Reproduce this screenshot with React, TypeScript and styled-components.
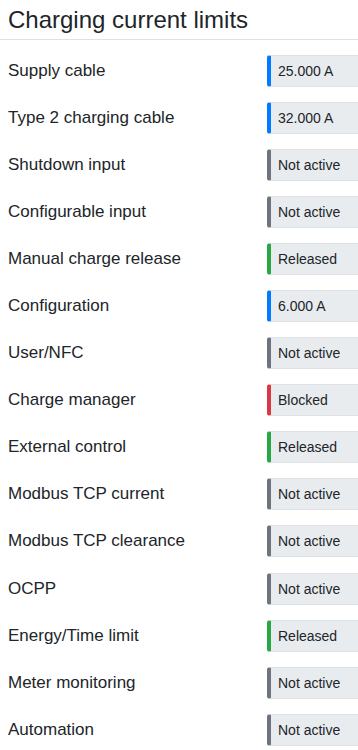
import styled, { createGlobalStyle } from "styled-components";
import type { FC } from "react";

type Tone = "blue" | "green" | "red" | "gray";

const toneColors: Record<Tone, string> = {
    blue: "#007bff",
    green: "#28a745",
    red: "#dc3545",
    gray: "#6c757d"
};

const GlobalStyle = createGlobalStyle`
    body {
        margin: 0;
        background: #ffffff;
        font-family: "Liberation Sans", Arial, sans-serif;
        color: #212529;
        overflow: hidden;
    }
`;

const Page = styled.div`
    width: 358px;
    overflow: hidden;
`;

const Header = styled.div`
    height: 39px;
    border-bottom: 1px solid #dee2e6;
    padding: 0 8px;
    display: flex;
    align-items: center;
`;

const Title = styled.h1`
    margin: 0;
    font-size: 24px;
    font-weight: 400;
    line-height: 1;
`;

const List = styled.div`
    display: flex;
    flex-direction: column;
    padding-top: 7px;
`;

const Row = styled.div`
    height: 47.1px;
    display: flex;
    align-items: center;
    justify-content: space-between;
    padding-left: 8px;
`;

const Label = styled.span`
    font-size: 17px;
`;

const Badge = styled.div<{ $tone: Tone }>`
    box-sizing: border-box;
    width: 102px;
    margin-right: -11px;
    height: 32px;
    display: flex;
    align-items: center;
    padding-left: 7px;
    background: #e9ecef;
    border: 1px solid #dee2e6;
    border-left: 4px solid ${(p) => toneColors[p.$tone]};
    border-radius: 3px;
    font-size: 14px;
`;

const rows: { label: string; value: string; tone: Tone }[] = [
    { label: "Supply cable", value: "25.000 A", tone: "blue" },
    { label: "Type 2 charging cable", value: "32.000 A", tone: "blue" },
    { label: "Shutdown input", value: "Not active", tone: "gray" },
    { label: "Configurable input", value: "Not active", tone: "gray" },
    { label: "Manual charge release", value: "Released", tone: "green" },
    { label: "Configuration", value: "6.000 A", tone: "blue" },
    { label: "User/NFC", value: "Not active", tone: "gray" },
    { label: "Charge manager", value: "Blocked", tone: "red" },
    { label: "External control", value: "Released", tone: "green" },
    { label: "Modbus TCP current", value: "Not active", tone: "gray" },
    { label: "Modbus TCP clearance", value: "Not active", tone: "gray" },
    { label: "OCPP", value: "Not active", tone: "gray" },
    { label: "Energy/Time limit", value: "Released", tone: "green" },
    { label: "Meter monitoring", value: "Not active", tone: "gray" },
    { label: "Automation", value: "Not active", tone: "gray" }
];

const App: FC = () => {
    return (
        <Page>
            <GlobalStyle />
            <Header>
                <Title>Charging current limits</Title>
            </Header>
            <List>
                {rows.map((row) => (
                    <Row key={row.label}>
                        <Label>{row.label}</Label>
                        <Badge $tone={row.tone}>{row.value}</Badge>
                    </Row>
                ))}
            </List>
        </Page>
    );
};

export default App;
